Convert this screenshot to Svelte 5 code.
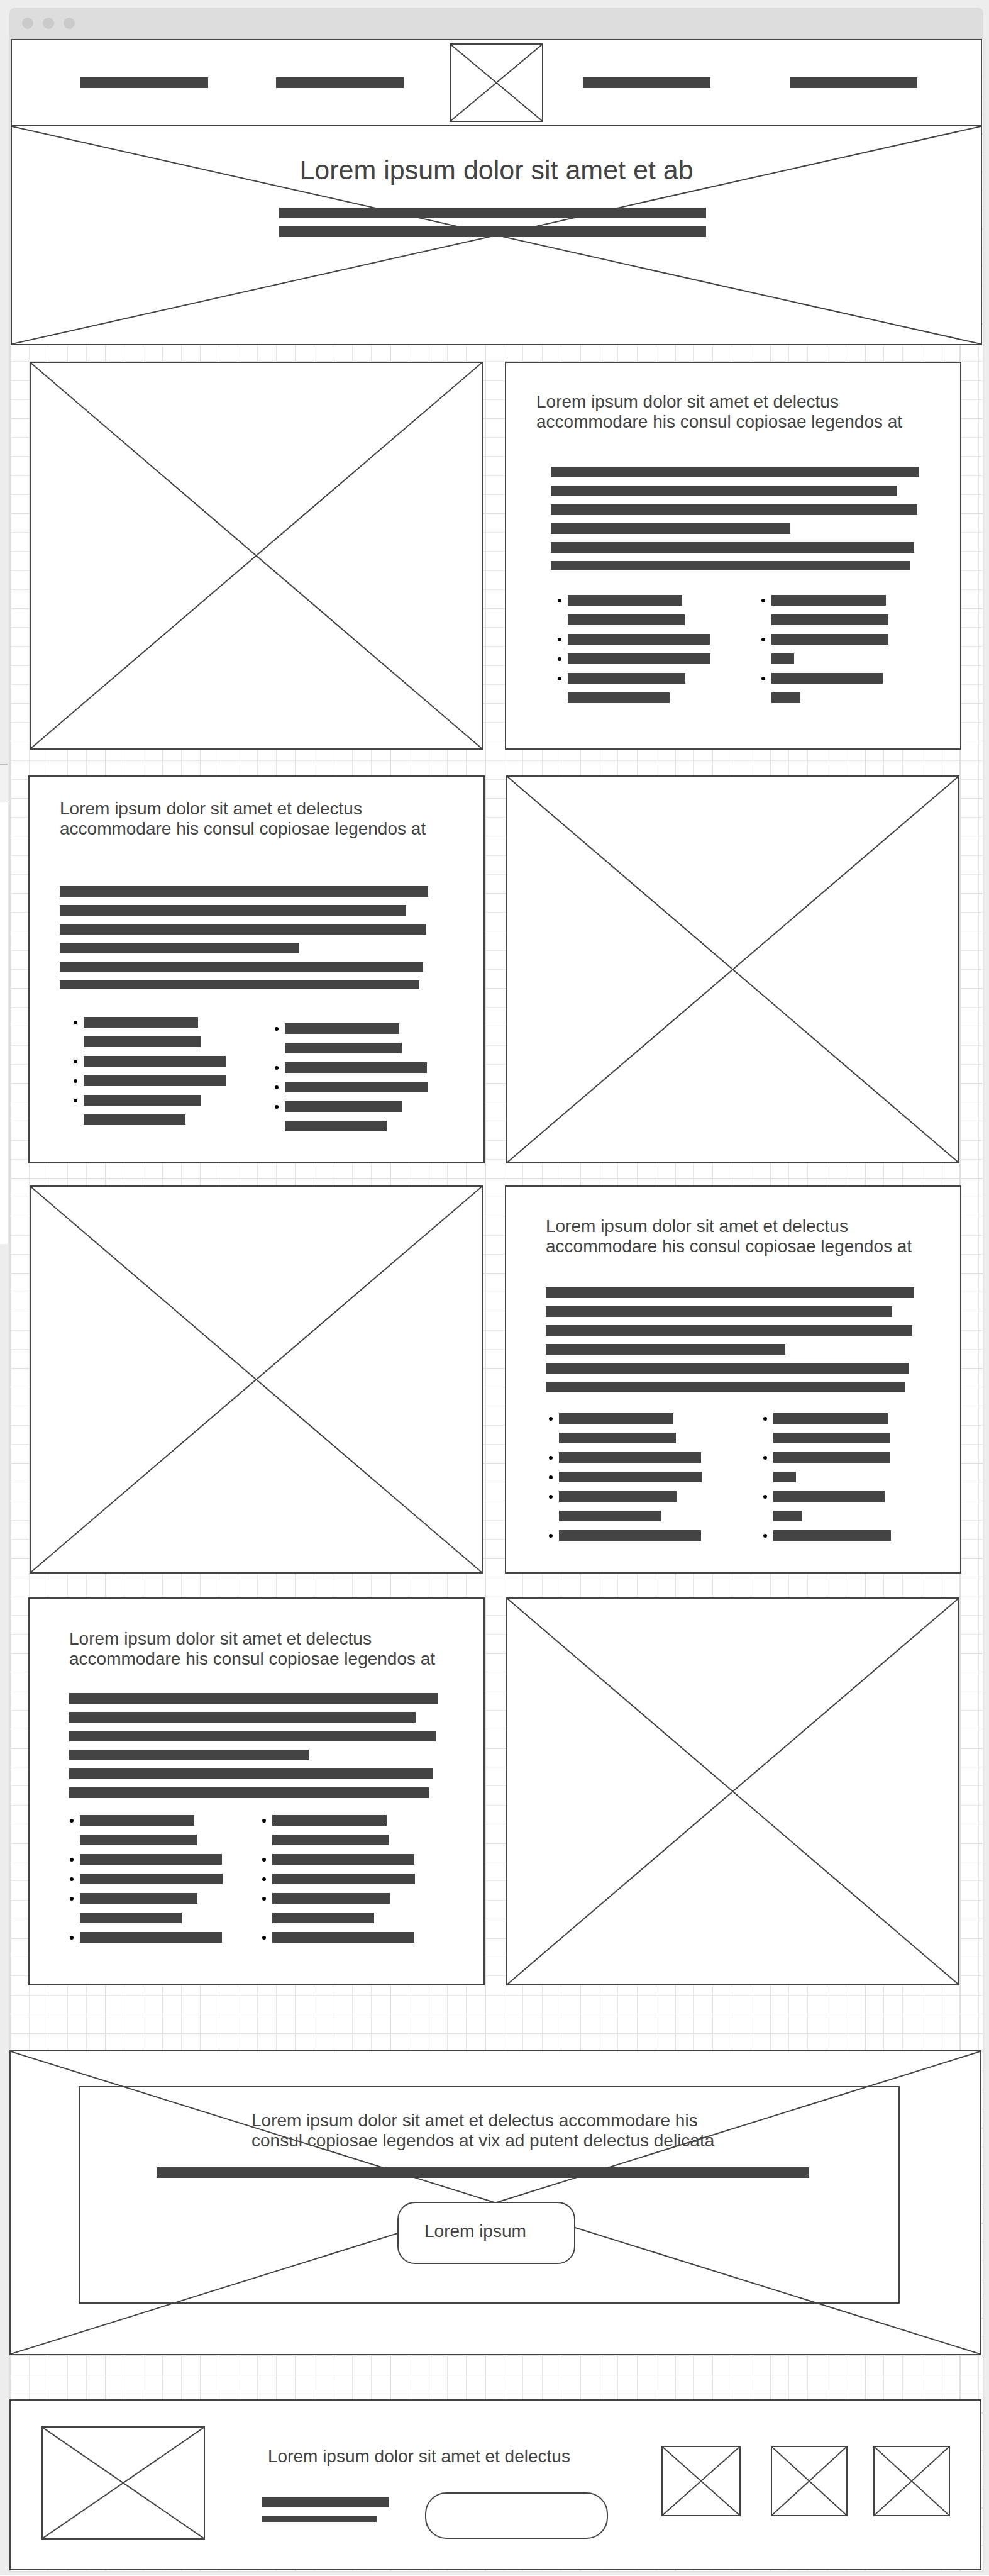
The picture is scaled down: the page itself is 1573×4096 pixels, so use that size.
<script>
  const paragraph = [586, 551, 583, 381, 578, 572];
  const listA = [
    { bullet: true, width: 182 },
    { bullet: false, width: 186 },
    { bullet: true, width: 226 },
    { bullet: true, width: 227 },
    { bullet: true, width: 187 },
    { bullet: false, width: 162 },
  ];
  const listB = [
    { bullet: true, width: 182 },
    { bullet: false, width: 186 },
    { bullet: true, width: 186 },
    { bullet: false, width: 36 },
    { bullet: true, width: 177 },
    { bullet: false, width: 46 },
  ];
  const rows = [
    { name: 'one', imageFirst: true, lists: [listA, listB] },
    { name: 'two', imageFirst: false, lists: [listA, listA] },
    {
      name: 'three',
      imageFirst: true,
      lists: [
        [...listA, { bullet: true, width: 226 }],
        [...listB, { bullet: true, width: 187 }],
      ],
    },
    {
      name: 'four',
      imageFirst: false,
      lists: [
        [...listA, { bullet: true, width: 226 }],
        [...listA, { bullet: true, width: 226 }],
      ],
    },
  ];
</script>

{#snippet cross()}
  <svg class="cross" viewBox="0 0 100 100" preserveAspectRatio="none" aria-hidden="true">
    <path d="M0 0L100 100M100 0L0 100" />
  </svg>
{/snippet}

<div class="page">
  <div class="rail" aria-hidden="true"></div>
  <div class="titlebar" aria-hidden="true">
    <span class="dot"></span>
    <span class="dot"></span>
    <span class="dot"></span>
  </div>

  <div class="sheet">
    <header class="header">
      <nav class="links left" aria-label="Primary">
        <a href="#first" aria-label="First link"></a>
        <a href="#second" aria-label="Second link"></a>
      </nav>
      <a class="logo frame" href="#home" aria-label="Home">{@render cross()}</a>
      <nav class="links right" aria-label="Secondary">
        <a href="#third" aria-label="Third link"></a>
        <a href="#fourth" aria-label="Fourth link"></a>
      </nav>
    </header>

    <section class="hero frame">
      {@render cross()}
      <div class="over">
        <h1>Lorem ipsum dolor sit amet et ab</h1>
        <div class="hero-lines">
          <span class="bar"></span>
          <span class="bar"></span>
        </div>
      </div>
    </section>

    <main>
      {#each rows as row}
        <section class="row {row.name}" class:flip={!row.imageFirst}>
          <div class="image frame">{@render cross()}</div>
          <article class="card frame">
            <h2>Lorem ipsum dolor sit amet et delectus<br />accommodare his consul copiosae legendos at</h2>
            <div class="paragraph">
              {#each paragraph as width}
                <span class="bar" style:width="{width}px"></span>
              {/each}
            </div>
            <div class="lists">
              {#each row.lists as list}
                <ul>
                  {#each list as item}
                    <li class:bullet={item.bullet}>
                      <span class="bar" style:width="{item.width}px"></span>
                    </li>
                  {/each}
                </ul>
              {/each}
            </div>
          </article>
        </section>
      {/each}
    </main>

    <section class="cta frame">
      {@render cross()}
      <div class="panel frame over">
        <p>Lorem ipsum dolor sit amet et delectus accommodare his<br />consul copiosae legendos at vix ad putent delectus delicata</p>
        <span class="bar"></span>
        <button type="button">Lorem ipsum</button>
      </div>
    </section>

    <footer class="footer frame">
      <div class="footer-image frame">{@render cross()}</div>
      <div class="contact">
        <h3><label for="contact-field">Lorem ipsum dolor sit amet et delectus</label></h3>
        <div class="contact-row">
          <div class="contact-lines">
            <span class="bar"></span>
            <span class="bar short"></span>
          </div>
          <input id="contact-field" type="text" />
        </div>
      </div>
      <div class="social">
        <a class="frame" href="#social-one" aria-label="Social one">{@render cross()}</a>
        <a class="frame" href="#social-two" aria-label="Social two">{@render cross()}</a>
        <a class="frame" href="#social-three" aria-label="Social three">{@render cross()}</a>
      </div>
    </footer>
  </div>
</div>

<style>
  :global(body) {
    margin: 0;
    background: #fff;
  }

  .page {
    --ink: #444;
    --minor: #e7e7e7;
    --major: #e0e0e0;
    position: relative;
    box-sizing: border-box;
    padding: 12px 9px 7px 15px;
    background: #ededed;
    color: var(--ink);
    font-family: 'Liberation Sans', Arial, sans-serif;
    font-size: 28px;
    line-height: 32px;
  }

  .page :where(*) {
    box-sizing: border-box;
  }

  /* Collapsed side tab that peeks out from behind the sheet. */
  .rail {
    position: absolute;
    left: 0;
    top: 1215px;
    width: 12px;
    height: 763px;
    background: linear-gradient(#f2f2f2 59px, #fff 59px);
    border-top: 1px solid #bbb;
  }

  .rail::after {
    content: '';
    display: block;
    height: 59px;
    border-bottom: 1px solid #bbb;
  }

  h1,
  h2,
  h3,
  p,
  ul {
    margin: 0;
    padding: 0;
    font-weight: 400;
    font-size: inherit;
  }

  .titlebar {
    display: flex;
    align-items: center;
    gap: 15px;
    height: 50px;
    padding: 0 20px;
    background: #ddd;
    border-radius: 9px 9px 0 0;
  }

  .dot {
    width: 18px;
    height: 18px;
    border-radius: 50%;
    background: #cacaca;
  }

  .sheet {
    display: flow-root;
    padding-bottom: 1px;
    border: solid #ddd;
    border-width: 0 1px;
    background-color: #fff;
    background-image:
      linear-gradient(to right, var(--major) 2px, transparent 2px),
      linear-gradient(to bottom, var(--major) 2px, transparent 2px),
      linear-gradient(to right, transparent 30px, var(--minor) 30px 31px, transparent 31px 60px, var(--minor) 60px 61px, transparent 61px 91px, var(--minor) 91px 92px, transparent 92px 121px, var(--minor) 121px 122px, transparent 122px),
      linear-gradient(to bottom, transparent 30px, var(--minor) 30px 31px, transparent 31px 60px, var(--minor) 60px 61px, transparent 61px 91px, var(--minor) 91px 92px, transparent 92px 121px, var(--minor) 121px 122px, transparent 122px);
    background-size: 151px 151px;
    background-position: 0 -1px;
    box-shadow: 0 1px 3px rgba(0, 0, 0, 0.1);
  }

  .frame {
    position: relative;
    border: 2px solid var(--ink);
    background: #fff;
  }

  .cross {
    position: absolute;
    inset: 0;
    width: 100%;
    height: 100%;
  }

  .cross path {
    fill: none;
    stroke: var(--ink);
    stroke-width: 2;
    vector-effect: non-scaling-stroke;
  }

  .over {
    position: relative;
  }

  .bar {
    display: block;
    height: 17px;
    max-width: 100%;
    background: var(--ink);
  }

  .header {
    display: flex;
    align-items: center;
    height: 139px;
    margin: 0 1px;
    padding: 0 101px 0 109px;
    border: 2px solid var(--ink);
    background: #fff;
  }

  .links {
    display: flex;
  }

  .links a {
    width: 203px;
    height: 17px;
    background: var(--ink);
  }

  .links.left {
    gap: 108px;
    margin-right: 73px;
  }

  .links.right {
    gap: 126px;
    margin-left: auto;
  }

  .logo {
    width: 149px;
    height: 125px;
  }

  .hero {
    height: 350px;
    margin: -2px 1px 0;
    padding-top: 44px;
  }

  h1 {
    font-size: 43px;
    line-height: 50px;
    text-align: center;
  }

  .hero-lines {
    display: flex;
    flex-direction: column;
    gap: 13px;
    width: 44%;
    margin: 35px auto 0;
    padding-right: 12px;
    box-sizing: content-box;
  }

  main {
    margin-top: 26px;
  }

  .row {
    display: grid;
    grid-template-columns: 721fr 726fr;
    gap: 35px;
    padding: 0 34px 0 31px;
  }

  .row.flip {
    grid-template-columns: 726fr 721fr;
    gap: 34px;
    padding: 0 37px 0 29px;
  }

  .flip .image {
    order: 1;
  }

  .two {
    margin-top: 41px;
  }

  .three {
    margin-top: 35px;
  }

  .four {
    margin-top: 38px;
  }

  .card {
    min-width: 0;
    min-height: 617px;
  }

  .paragraph {
    display: flex;
    flex-direction: column;
    gap: 13px;
  }

  .lists {
    display: flex;
  }

  ul {
    display: flex;
    flex-direction: column;
    gap: 14px;
    list-style: none;
  }

  li {
    position: relative;
    padding-left: 16px;
  }

  .bullet::before {
    content: '';
    position: absolute;
    left: 0;
    top: 6px;
    width: 6px;
    height: 6px;
    border-radius: 50%;
    background: #000;
  }

  .one .card {
    padding: 46px 48px 0;
  }

  .one .paragraph {
    margin: 55px 0 0 23px;
  }

  .one .lists {
    margin: 40px 0 0 34px;
  }

  .one ul:first-child {
    width: 324px;
  }

  .two .card {
    padding: 35px 48px 0;
  }

  .two .paragraph {
    margin-top: 75px;
  }

  .two .lists {
    margin: 44px 0 0 22px;
  }

  .one .paragraph .bar:last-child,
  .two .paragraph .bar:last-child {
    height: 14px;
  }

  .two ul:first-child {
    width: 320px;
  }

  .two ul:last-child {
    margin-top: 10px;
  }

  .three .card {
    padding: 47px 63px 0;
  }

  .three .paragraph {
    margin-top: 49px;
  }

  .three .lists {
    margin: 33px 0 0 5px;
  }

  .three ul:first-child {
    width: 341px;
  }

  .four .card {
    padding: 48px 63px 0;
  }

  .four .paragraph {
    margin-top: 38px;
  }

  .four .lists {
    margin: 27px 0 0 1px;
  }

  .four ul:first-child {
    width: 306px;
  }

  h2,
  h3,
  p {
    white-space: nowrap;
  }

  .cta {
    height: 485px;
    margin: 103px 2px 0 -1px;
    padding: 55px 128px 80px 108px;
  }

  .panel {
    height: 346px;
    padding: 37px 142px 0 122px;
    background: none;
  }

  .cta p {
    padding-left: 151px;
  }

  .cta .bar {
    margin-top: 26px;
  }

  .cta button {
    display: block;
    width: 283px;
    height: 99px;
    margin: 38px 0 0 383px;
    padding: 0 0 6px 41px;
    border: 2px solid var(--ink);
    border-radius: 28px;
    background: #fff;
    color: inherit;
    font: inherit;
    text-align: left;
  }

  .footer {
    display: flex;
    align-items: flex-start;
    height: 272px;
    margin: 70px 2px 0 -1px;
    padding: 41px 48px 48px 49px;
  }

  .footer-image {
    flex: none;
    width: 260px;
    height: 180px;
  }

  .contact {
    margin: 32px 0 0 90px;
  }

  .contact h3 {
    padding-left: 10px;
  }

  .contact-row {
    display: flex;
    gap: 57px;
    margin-top: 41px;
  }

  .contact-lines {
    width: 203px;
    padding-top: 7px;
  }

  .contact-lines .short {
    width: 183px;
    height: 10px;
    margin-top: 13px;
  }

  input {
    width: 291px;
    height: 74px;
    padding: 0 32px;
    border: 2px solid var(--ink);
    border-radius: 34px;
    background: #fff;
    color: inherit;
    font: inherit;
  }

  .social {
    display: flex;
    gap: 41px;
    margin: 31px 0 0 auto;
  }

  .social a {
    width: 122px;
    height: 112px;
  }

  .social a:first-child {
    width: 126px;
    margin-right: 7px;
  }
</style>
